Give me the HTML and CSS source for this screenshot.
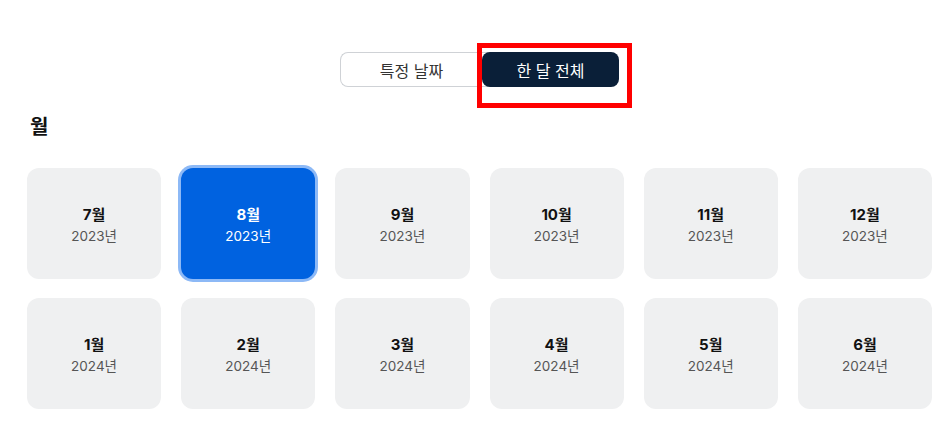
FILE: index.html
```html
<!DOCTYPE html>
<html lang="ko">
<head>
<meta charset="utf-8">
<link rel="stylesheet" href="styles.css">
</head>
<body>
<div class="page">
  <div class="toggle-row">
    <div class="toggle">
      <button class="tab">특정 날짜</button>
      <div class="highlight">
        <button class="tab active">한 달 전체</button>
      </div>
    </div>
  </div>
  <h2 class="heading">월</h2>
  <div class="grid">
    <div class="card"><div class="m">7월</div><div class="y">2023년</div></div>
    <div class="card selected"><div class="m">8월</div><div class="y">2023년</div></div>
    <div class="card"><div class="m">9월</div><div class="y">2023년</div></div>
    <div class="card"><div class="m">10월</div><div class="y">2023년</div></div>
    <div class="card"><div class="m">11월</div><div class="y">2023년</div></div>
    <div class="card"><div class="m">12월</div><div class="y">2023년</div></div>
    <div class="card"><div class="m">1월</div><div class="y">2024년</div></div>
    <div class="card"><div class="m">2월</div><div class="y">2024년</div></div>
    <div class="card"><div class="m">3월</div><div class="y">2024년</div></div>
    <div class="card"><div class="m">4월</div><div class="y">2024년</div></div>
    <div class="card"><div class="m">5월</div><div class="y">2024년</div></div>
    <div class="card"><div class="m">6월</div><div class="y">2024년</div></div>
  </div>
</div>
</body>
</html>
```
FILE: styles.css
```css
* { box-sizing: border-box; }
html, body { margin: 0; background: #fff; }
body {
  font-family: Inter, "Noto Sans CJK KR", "Noto Sans", sans-serif;
  color: #111;
}
.page {
  width: 905px;
  margin-left: 27px;
  padding-top: 52px;
}
.toggle-row {
  display: flex;
  justify-content: center;
}
.toggle {
  display: flex;
  width: 279px;
  height: 35px;
  position: relative;
}
.tab {
  font-family: inherit;
  font-size: 16px;
  border: none;
  background: none;
  cursor: pointer;
  padding: 0;
}
.toggle > .tab {
  width: 152px;
  margin-right: -10px;
  padding-right: 10px;
  border: 1px solid #cfd2d6;
  border-radius: 8px 0 0 8px;
  border-right: none;
  color: #333;
  background: #fff;
}
.highlight {
  position: relative;
  flex: 1;
  display: flex;
}
.highlight::after {
  content: "";
  position: absolute;
  left: -5px;
  right: -13px;
  top: -9px;
  bottom: -21px;
  border: 5px solid #ff0000;
  pointer-events: none;
}
.tab.active {
  flex: 1;
  background: #0a1f38;
  color: #fff;
  border-radius: 8px;
}
.heading {
  margin: 28px 0 0 3px;
  font-size: 20px;
  font-weight: 700;
  line-height: 24px;
  height: 24px;
}
.grid {
  margin-top: 29px;
  display: grid;
  grid-template-columns: repeat(6, 1fr);
  column-gap: 20px;
  row-gap: 19px;
}
.card {
  height: 111px;
  background: #eff0f1;
  border-radius: 12px;
  display: flex;
  flex-direction: column;
  align-items: center;
  justify-content: center;
  padding-top: 4px;
}
.card .m {
  font-size: 15px;
  font-weight: 700;
  color: #111;
  line-height: 20px;
}
.card .y {
  font-size: 13.5px;
  color: #555;
  line-height: 20px;
  margin-top: 1px;
}
.card.selected {
  background: #0062e0;
  box-shadow: 0 0 0 3px #8db9f6;
}
.card.selected .m, .card.selected .y { color: #fff; }
```
